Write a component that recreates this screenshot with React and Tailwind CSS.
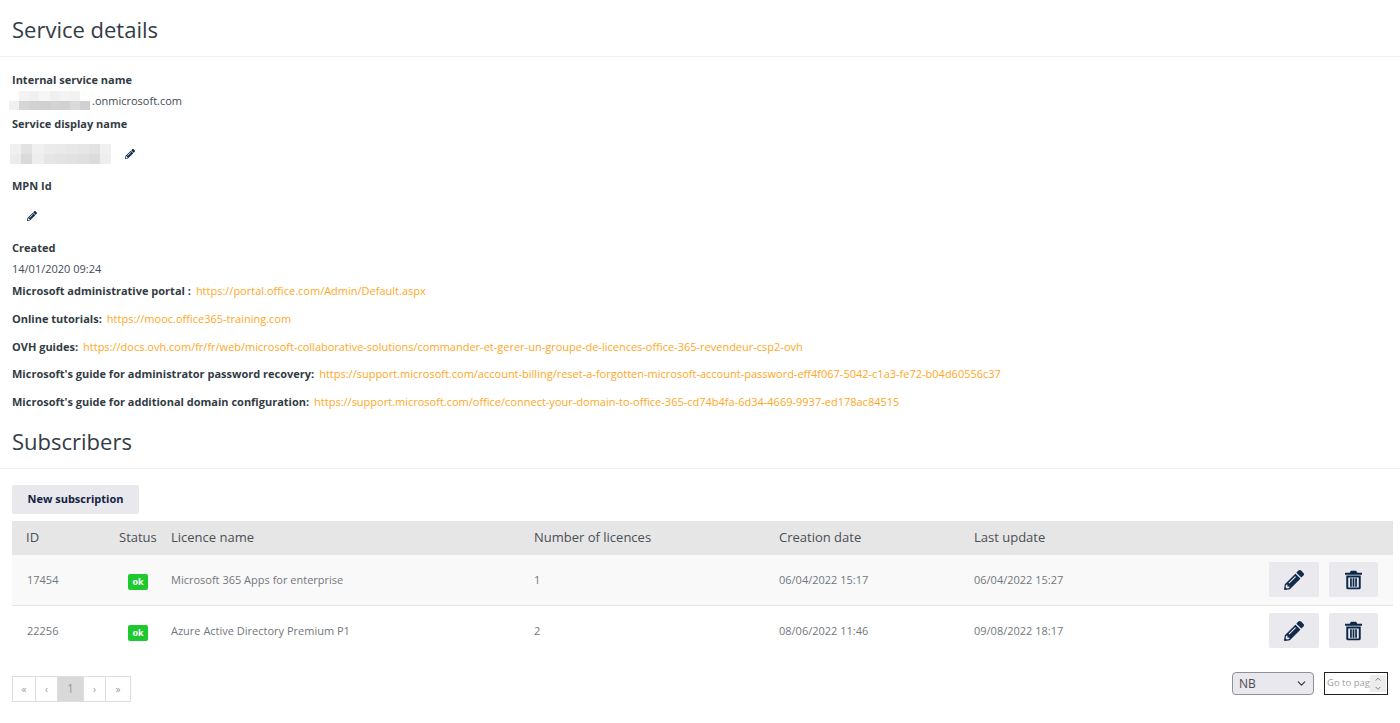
import React from "react";
import { FaPencilAlt } from "react-icons/fa";
import { ChevronDown, ChevronUp } from "lucide-react";

const links = [
  ["Microsoft administrative portal :", "https://portal.office.com/Admin/Default.aspx", "h-[28px]"],
  ["Online tutorials:", "https://mooc.office365-training.com", "h-[28px]"],
  ["OVH guides:", "https://docs.ovh.com/fr/fr/web/microsoft-collaborative-solutions/commander-et-gerer-un-groupe-de-licences-office-365-revendeur-csp2-ovh", "h-[28px]"],
  ["Microsoft's guide for administrator password recovery:", "https://support.microsoft.com/account-billing/reset-a-forgotten-microsoft-account-password-eff4f067-5042-c1a3-fe72-b04d60556c37", "h-[27px]"],
  ["Microsoft's guide for additional domain configuration:", "https://support.microsoft.com/office/connect-your-domain-to-office-365-cd74b4fa-6d34-4669-9937-ed178ac84515", "h-[28px]"],
];

const subscribers = [
  { id: "17454", name: "Microsoft 365 Apps for enterprise", count: "1", created: "06/04/2022 15:17", updated: "06/04/2022 15:27", row: "bg-[#f9f9f9] h-[50px] border-b border-[#e5e5e5]" },
  { id: "22256", name: "Azure Active Directory Premium P1", count: "2", created: "08/06/2022 11:46", updated: "09/08/2022 18:17", row: "bg-white h-[51px]" },
];

// blurred out values in the screenshot
const Pixelated = ({ className, rows }) => (
  <div className={`flex flex-col blur-[0.4px] ${className}`}>
    {rows.map((cells, r) => (
      <div key={r} className="flex flex-1">
        {cells.map((c, i) => (
          <div key={i} className="flex-1" style={{ backgroundColor: c }} />
        ))}
      </div>
    ))}
  </div>
);

const Label = ({ children, className = "" }) => (
  <div className={`font-bold text-[#323b44] flex items-center ${className}`}>{children}</div>
);

const Edit = () => <FaPencilAlt className="text-[10px] text-[#122b4a]" />;

const App = () => {
  return (
    <div className="w-[1400px] h-[723px] overflow-hidden bg-white text-[11px] font-['Open_Sans',sans-serif]">
      <div className="h-[57px] border-b border-[#efefef] px-3 pt-[2px] flex items-center">
        <h1 className="text-[22px] leading-none text-[#333c45]">Service details</h1>
      </div>

      <div className="px-3 pt-[13px]">
        <Label className="h-[20px]">Internal service name</Label>
        <div className="h-[22px] flex items-center text-[#444c55] relative pl-[80px]">
          .onmicrosoft.com
          <Pixelated
            className="absolute left-[-3px] top-[1px] w-[81px] h-[19px]"
            rows={[
              ["#ffffff", "#f3f3f3", "#f0f0f0", "#f6f6f6", "#f0f0f0", "#f4f4f4", "#f2f2f2", "#ffffff"],
              ["#f0f0f0", "#d6d6d6", "#d2d2d2", "#d0d0d0", "#d4d4d4", "#d2d2d2", "#dadada", "#d0d0d0"],
            ]}
          />
        </div>
        <Label className="h-[24px]">Service display name</Label>
        <div className="h-[38px] pb-[2px] flex items-center gap-[14px] -ml-[2px]">
          <Pixelated
            className="w-[101px] h-[20px]"
            rows={[
              ["#f0f0f0", "#e2e2e2", "#f0f0f0", "#ebebeb", "#eaeaea", "#e8e8e8", "#e6e6e6", "#e2e2e2", "#f0f0f0"],
              ["#ececec", "#dadada", "#eeeeee", "#e6e6e6", "#e4e4e4", "#e2e2e2", "#e0e0e0", "#dcdcdc", "#eeeeee"],
            ]}
          />
          <Edit />
        </div>
        <Label className="h-[24px]">MPN Id</Label>
        <div className="h-[38px] pb-[2px] flex items-center pl-[15px]">
          <Edit />
        </div>
        <Label className="h-[24px]">Created</Label>
        <div className="h-[20px] -mt-px flex items-center text-[#444c55]">14/01/2020 09:24</div>

        <div className="-mt-[2px]">
          {links.map(([label, url, height]) => (
            <div key={label} className={`${height} flex items-center gap-[5px]`}>
              <span className="font-bold text-[#323b44]">{label}</span>
              <a href={url} className="text-[#ffa726]">{url}</a>
            </div>
          ))}
        </div>
      </div>

      <div className="h-[53px] pb-[2px] border-b border-[#efefef] px-3 flex items-center">
        <h1 className="text-[22px] leading-none text-[#333c45]">Subscribers</h1>
      </div>

      <div className="px-3 pt-[16px]">
        <button className="block w-[127px] h-[29px] bg-[#e8e8ed] rounded-[2px] font-bold text-[#14233f]">New subscription</button>

        <table className="mt-[7px] w-[1381px] table-fixed border-collapse text-left">
          <thead>
            <tr className="bg-[#e6e6e6] h-[34px] text-[13px] text-[#4a4f55]">
              <th className="w-[92px] pl-[14px] font-normal">ID</th>
              <th className="w-[67px] pl-[15px] font-normal">Status</th>
              <th className="w-[363px] font-normal">Licence name</th>
              <th className="w-[245px] font-normal">Number of licences</th>
              <th className="w-[195px] font-normal">Creation date</th>
              <th className="font-normal">Last update</th>
              <th className="w-[124px]" />
            </tr>
          </thead>
          <tbody className="text-[#73777c] text-[11px]">
            {subscribers.map((s) => (
              <tr key={s.id} className={s.row}>
                <td className="pl-[15px]">{s.id}</td>
                <td className="pl-[24px]">
                  <span className="inline-flex items-center justify-center w-[20px] h-[16px] mt-[4px] rounded-[2px] bg-[#1ec930] text-white text-[9px] font-bold">ok</span>
                </td>
                <td>{s.name}</td>
                <td>{s.count}</td>
                <td>{s.created}</td>
                <td>{s.updated}</td>
                <td>
                  <div className="flex gap-[10px]">
                    <button className="w-[50px] h-[35px] bg-[#e9e9ee] rounded-[2px] flex items-center justify-center">
                      <FaPencilAlt className="text-[20px] text-[#122b4a]" />
                    </button>
                    <button className="w-[49px] h-[35px] bg-[#e9e9ee] rounded-[2px] flex items-center justify-center">
                      <svg viewBox="0 0 20 22" className="w-[17px] h-[20px] text-[#0d2748]" fill="currentColor">
                        <path d="M7 0h6l1.500 2.500H20v2.300H0V2.500h5.500zM1.500 5.800h17V20a2 2 0 0 1-2 2h-13a2 2 0 0 1-2-2zm2.300 2.200V19.800h12.400V8z" fillRule="evenodd" />
                        <path d="M6 9h2v10H6zM9 9h2v10H9zM12 9h2v10h-2z" />
                      </svg>
                    </button>
                  </div>
                </td>
              </tr>
            ))}
          </tbody>
        </table>

        <div className="mt-[20px] flex justify-between items-start w-[1376px]">
          <div className="flex h-[26px] border border-[#dedede] text-[#9a9a9a] text-[10px]">
            <span className="w-[23px] border-r border-[#dedede] flex items-center justify-center">«</span>
            <span className="w-[22px] border-r border-[#dedede] flex items-center justify-center">‹</span>
            <span className="w-[26px] border-r border-[#dedede] bg-[#d9d9d9] text-[12px] flex items-center justify-center">1</span>
            <span className="w-[22px] border-r border-[#dedede] flex items-center justify-center">›</span>
            <span className="w-[24px] flex items-center justify-center">»</span>
          </div>
          <div className="flex gap-[10px] -mt-[4px]">
            <div className="w-[82px] h-[23px] bg-[#e9e9ed] border border-[#8f8f9d] rounded-[4px] flex items-center justify-between pl-[6px] pr-[5px] text-[12px] text-[#4a4a50]">
              NB
              <ChevronDown size={13} strokeWidth={2} className="text-[#333]" />
            </div>
            <div className="w-[64px] h-[23px] border border-[#222] flex items-center justify-between pl-[2px] pr-[2px] text-[9.5px] text-[#a0a0a0] overflow-hidden">
              <span className="whitespace-nowrap">Go to pag</span>
              <span className="w-[16px] h-[17px] bg-[#ececec] flex flex-col items-center justify-center shrink-0 text-[#555]">
                <ChevronUp size={10} />
                <ChevronDown size={10} />
              </span>
            </div>
          </div>
        </div>
      </div>
    </div>
  );
};

export default App;
